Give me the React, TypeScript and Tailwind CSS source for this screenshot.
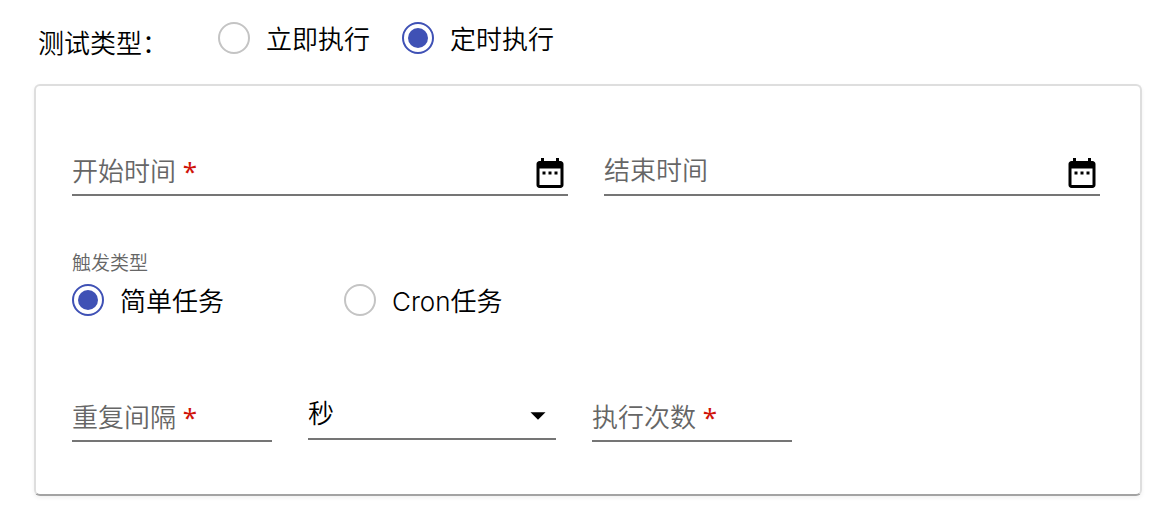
import { useState } from "react";
import type { ReactNode } from "react";

function RadioOption({
  name,
  label,
  checked,
  onSelect,
}: {
  name: string;
  label: string;
  checked: boolean;
  onSelect: () => void;
}) {
  return (
    <label className="flex cursor-pointer items-start gap-4 whitespace-nowrap">
      <input
        type="radio"
        name={name}
        checked={checked}
        onChange={onSelect}
        className="grid size-8 shrink-0 appearance-none place-content-center rounded-full border-2 border-[#c4c4c4] before:size-5 before:rounded-full before:bg-transparent checked:border-[#3f51b5] checked:before:bg-[#3f51b5]"
      />
      <span>{label}</span>
    </label>
  );
}

function Field({
  id,
  label,
  required = false,
  type = "text",
  children,
}: {
  id: string;
  label: string;
  required?: boolean;
  type?: string;
  children?: ReactNode;
}) {
  return (
    <div className="flex h-12 items-center border-b-2 border-[#757575]">
      <div className="grid min-w-0 flex-1 items-center">
        <input
          id={id}
          type={type}
          required={required}
          placeholder=" "
          className="peer col-start-1 row-start-1 h-10 w-full min-w-0 bg-transparent text-black outline-none"
        />
        <label
          htmlFor={id}
          className="pointer-events-none col-start-1 row-start-1 whitespace-nowrap text-[#666666] peer-[:not(:placeholder-shown)]:invisible"
        >
          {label}
          {required && (
            <span className="font-['Noto_Sans',sans-serif] font-normal text-[#d0140a]"> *</span>
          )}
        </label>
      </div>
      {children}
    </div>
  );
}

function CalendarButton({ label }: { label: string }) {
  return (
    <button type="button" aria-label={label} className="mt-1 shrink-0 cursor-pointer">
      <svg viewBox="0 0 24 24" className="block size-9 fill-black" aria-hidden="true">
        <path d="M9 11H7v2h2v-2zm4 0h-2v2h2v-2zm4 0h-2v2h2v-2zm2-7h-1V2h-2v2H8V2H6v2H5c-1.11 0-1.99.9-1.99 2L3 20c0 1.1.89 2 2 2h14c1.1 0 2-.9 2-2V6c0-1.1-.9-2-2-2zm0 16H5V9h14v11z" />
      </svg>
    </button>
  );
}

export default function App() {
  const [mode, setMode] = useState("scheduled");
  const [trigger, setTrigger] = useState("simple");

  return (
    <form className="bg-white px-[34px] pt-[22px] pb-6 font-['Inter','Noto_Sans_CJK_SC',sans-serif] text-[26px] leading-9 font-[350] text-black">
      <div role="radiogroup" aria-labelledby="mode-label" className="flex items-start pl-1">
        <span id="mode-label" className="mr-[50px] pt-1 whitespace-nowrap">
          测试类型：
        </span>
        <div className="flex gap-8">
          <RadioOption
            name="mode"
            label="立即执行"
            checked={mode === "now"}
            onSelect={() => setMode("now")}
          />
          <RadioOption
            name="mode"
            label="定时执行"
            checked={mode === "scheduled"}
            onSelect={() => setMode("scheduled")}
          />
        </div>
      </div>

      <section className="mt-[22px] rounded-md border-2 border-[#dedede] border-b-[#a3a3a3] pt-[62px] pr-10 pb-[52px] pl-9 shadow-[0_2px_4px_rgba(0,0,0,0.06)]">
        <div className="grid grid-cols-2 gap-9">
          <Field id="start-time" label="开始时间" required>
            <CalendarButton label="选择开始时间" />
          </Field>
          <Field id="end-time" label="结束时间">
            <CalendarButton label="选择结束时间" />
          </Field>
        </div>

        <div role="radiogroup" aria-labelledby="trigger-label" className="mt-[54px]">
          <div id="trigger-label" className="text-[19px] leading-7 text-[#666666]">
            触发类型
          </div>
          <div className="mt-1.5 flex gap-[120px]">
            <RadioOption
              name="trigger"
              label="简单任务"
              checked={trigger === "simple"}
              onSelect={() => setTrigger("simple")}
            />
            <RadioOption
              name="trigger"
              label="Cron任务"
              checked={trigger === "cron"}
              onSelect={() => setTrigger("cron")}
            />
          </div>
        </div>

        <div className="mt-[74px] flex items-start gap-9">
          <div className="w-[200px]">
            <Field id="interval" label="重复间隔" required />
          </div>
          <div className="grid h-[46px] w-[248px] items-center border-b-2 border-[#757575]">
            <select
              aria-label="时间单位"
              defaultValue="s"
              className="col-start-1 row-start-1 h-10 w-full appearance-none bg-transparent pb-1 outline-none"
            >
              <option value="s">秒</option>
              <option value="m">分</option>
              <option value="h">时</option>
            </select>
            <svg
              viewBox="0 0 16 8"
              className="pointer-events-none col-start-1 row-start-1 mr-2.5 h-2 w-4 justify-self-end fill-black"
              aria-hidden="true"
            >
              <path d="M0.5 0.3h15L8 7.8z" />
            </svg>
          </div>
          <div className="w-[200px]">
            <Field id="count" label="执行次数" required />
          </div>
        </div>
      </section>
    </form>
  );
}
